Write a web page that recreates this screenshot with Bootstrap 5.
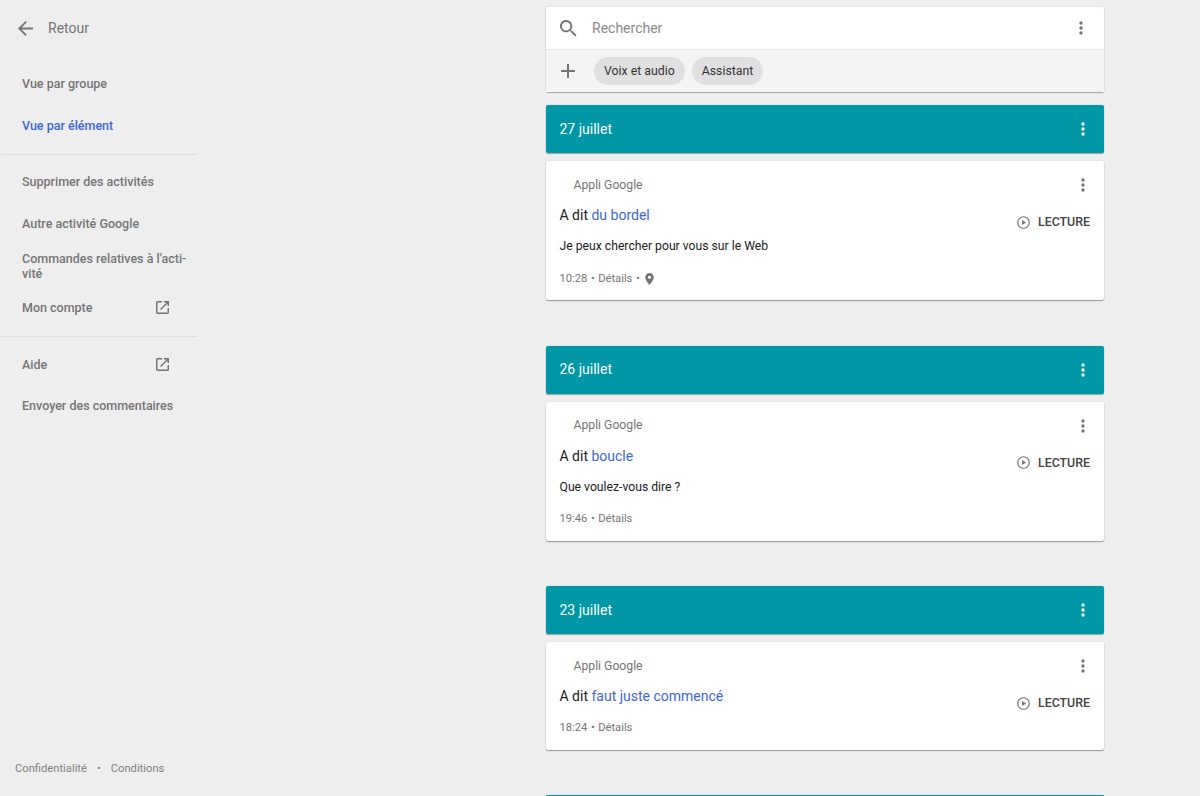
<!DOCTYPE html>
<html lang="fr">
<head>
<meta charset="utf-8">
<title>Mon activité</title>
<link href="https://cdn.jsdelivr.net/npm/bootstrap@5.3.0/dist/css/bootstrap.min.css" rel="stylesheet">
<style>
html,body{height:796px;overflow:hidden}
body{background:#eee;font-family:Roboto,"Liberation Sans",sans-serif;color:#212121;font-size:13px}
.shell{height:796px}
.side{width:197px;height:796px;flex:none}
.back-row{height:56px;padding-left:18px;color:#757575;font-size:14px;gap:15px}
.side-list{padding-top:6px}
.side-item{display:flex;align-items:center;justify-content:space-between;padding:0 28px 0 22px;height:42px;color:#757575;font-weight:500;font-size:12.5px;text-decoration:none;line-height:15px}
.side-item.on{color:#3d67d6}
.side-item.wide{padding-right:8px;white-space:nowrap}
.side-item.tall{height:33px;margin:5px 0 8px}
.side-item.slim{height:34px}
.side-item.last{height:41px}
.side-rule{border-top:1px solid #ddd;margin:8px 0 5px 1px}
.side-rule.lower{margin-top:12px;margin-bottom:6px}
.side-foot{padding:0 0 18px 15px;color:#808080;font-size:11.2px;gap:10px}
.main-col{margin-left:349px;width:558px;flex:none;padding-top:7px}
.searchbox{background:#fff;border-radius:2px;box-shadow:0 1px 1px rgba(0,0,0,.3),0 0 2px rgba(0,0,0,.12);margin-bottom:13px}
.search-top{height:43px;padding:0 21px 0 14px;border-bottom:1px solid #e6e6e6;color:#8a8a8a;font-size:14px;gap:15px}
.search-bottom{height:42px;background:#f4f4f4;padding:0 14px 0 15px}
.plus-ic{margin-right:19px;flex:none}
.chip-pill{background:#e0e0e0;border-radius:14px;height:28px;padding:1px 10px 0;display:flex;align-items:center;font-size:12.3px;color:#333;margin-right:7px}
.day-head{height:48px;background:#0097a7;color:#fff;font-size:14px;padding:0 19px 0 13.5px;border-radius:2px;box-shadow:0 1px 1px rgba(0,0,0,.3),0 0 2px rgba(0,0,0,.12);margin-bottom:8px}
.day-head.peek{height:1px;margin-bottom:0}
.entry{background:#fff;border-radius:2px;box-shadow:0 1px 1px rgba(0,0,0,.35),0 0 2px rgba(0,0,0,.12);margin-bottom:45.5px;padding:0 14px 0 13.5px;position:relative}
.entry-app{height:48px;padding:0 5px 0 14px;color:#757575;font-size:12.2px}
.entry-title{font-size:14px;line-height:20px;margin-top:-4px;color:#212121}
.entry-title span{color:#3d67d6}
.entry-reply{font-size:12.2px;line-height:16px;margin-top:13px;color:#212121}
.entry-meta{font-size:11.2px;color:#757575;height:16px;margin-top:17px;gap:3.5px}
.entry-meta.near{margin-top:14px}
.pin-ic{margin-left:2px}
.entry-play{position:absolute;right:14px;top:52px;font-size:12.4px;font-weight:500;color:#424242;gap:8px}
.pad-long{padding-bottom:13px}
.pad-short{padding-bottom:14px;margin-bottom:45px}
.dots-ic{display:block;flex:none}
</style>
</head>
<body>
<div class="shell d-flex">
  <aside class="side d-flex flex-column">
    <div class="back-row d-flex align-items-center">
      <svg width="15" height="15" viewBox="0 0 16 16" aria-hidden="true"><path d="M16 7H3.800l5.600-5.600L8 0 0 8l8 8 1.400-1.400L3.800 9H16z" fill="#757575"/></svg>
      <span>Retour</span>
    </div>
    <nav class="side-list">
      <a class="side-item" href="#">Vue par groupe</a>
      <a class="side-item on" href="#">Vue par élément</a>
      <div class="side-rule"></div>
      <a class="side-item" href="#">Supprimer des activités</a>
      <a class="side-item" href="#">Autre activité Google</a>
      <a class="side-item wide tall" href="#">Commandes relatives à l'acti-<br>vité</a>
      <a class="side-item slim" href="#">Mon compte
        <svg width="13" height="13" viewBox="0 0 14 14" aria-hidden="true"><path d="M12.400 12.400H1.600V1.600H6.500V0H1.600C.7 0 0 .7 0 1.600v10.800C0 13.300.7 14 1.600 14h10.800c.9 0 1.600-.7 1.600-1.600V7.500h-1.600zM8.500 0v1.600h2.800L4.400 8.500l1.100 1.100 6.900-6.900v2.800H14V0z" fill="#757575"/></svg>
      </a>
      <div class="side-rule lower"></div>
      <a class="side-item" href="#">Aide
        <svg width="13" height="13" viewBox="0 0 14 14" aria-hidden="true"><path d="M12.400 12.400H1.600V1.600H6.500V0H1.600C.7 0 0 .7 0 1.600v10.800C0 13.300.7 14 1.600 14h10.800c.9 0 1.600-.7 1.600-1.600V7.500h-1.600zM8.500 0v1.600h2.800L4.400 8.500l1.100 1.100 6.900-6.900v2.800H14V0z" fill="#757575"/></svg>
      </a>
      <a class="side-item wide last" href="#">Envoyer des commentaires</a>
    </nav>
    <div class="side-foot d-flex mt-auto"><span>Confidentialité</span><span>•</span><span>Conditions</span></div>
  </aside>

  <main class="main-col">
    <section class="searchbox">
      <div class="search-top d-flex align-items-center">
        <svg width="17" height="17" viewBox="0 0 18 18" aria-hidden="true"><path d="M12.500 11h-.8l-.3-.3A6.500 6.500 0 1 0 10.700 11.400l.3.3v.8l5 5 1.500-1.500zm-6 0A4.500 4.500 0 1 1 6.500 2a4.500 4.500 0 0 1 0 9z" fill="#757575"/></svg>
        <span class="flex-grow-1">Rechercher</span>
        <svg class="dots-ic" width="4" height="14" viewBox="0 0 4 14" aria-hidden="true"><circle cx="2" cy="2" r="1.700" fill="#757575"/><circle cx="2" cy="7" r="1.700" fill="#757575"/><circle cx="2" cy="12" r="1.700" fill="#757575"/></svg>
      </div>
      <div class="search-bottom d-flex align-items-center">
        <svg width="14" height="14" viewBox="0 0 14 14" class="plus-ic" aria-hidden="true"><path d="M14 8H8v6H6V8H0V6h6V0h2v6h6z" fill="#757575"/></svg>
        <span class="chip-pill">Voix et audio</span>
        <span class="chip-pill">Assistant</span>
      </div>
    </section>

    <div class="day-head d-flex align-items-center justify-content-between"><span>27 juillet</span>
      <svg class="dots-ic" width="4" height="14" viewBox="0 0 4 14" aria-hidden="true"><circle cx="2" cy="2" r="1.700" fill="#fff"/><circle cx="2" cy="7" r="1.700" fill="#fff"/><circle cx="2" cy="12" r="1.700" fill="#fff"/></svg>
    </div>
    <article class="entry pad-long">
      <div class="entry-app d-flex align-items-center justify-content-between"><span>Appli Google</span>
        <svg class="dots-ic" width="4" height="14" viewBox="0 0 4 14" aria-hidden="true"><circle cx="2" cy="2" r="1.700" fill="#757575"/><circle cx="2" cy="7" r="1.700" fill="#757575"/><circle cx="2" cy="12" r="1.700" fill="#757575"/></svg>
      </div>
      <div class="entry-title">A dit <span>du bordel</span></div>
      <div class="entry-reply">Je peux chercher pour vous sur le Web</div>
      <div class="entry-meta d-flex align-items-center"><span>10:28</span><span>•</span><span>Détails</span><span>•</span>
        <svg class="pin-ic" width="9" height="12" viewBox="0 0 10 14" aria-hidden="true"><path d="M5 0a5 5 0 0 0-5 5c0 3.500 5 9 5 9s5-5.500 5-9a5 5 0 0 0-5-5zm0 6.800A1.800 1.800 0 1 1 5 3.200a1.800 1.800 0 0 1 0 3.600z" fill="#757575"/></svg>
      </div>
      <div class="entry-play d-flex align-items-center">
        <svg width="13" height="13" viewBox="0 0 14 14" aria-hidden="true"><circle cx="7" cy="7" r="6.200" fill="none" stroke="#757575" stroke-width="1.300"/><path d="M5.500 4.200v5.600L9.800 7z" fill="#757575"/></svg>
        <span>LECTURE</span>
      </div>
    </article>

    <div class="day-head d-flex align-items-center justify-content-between"><span>26 juillet</span>
      <svg class="dots-ic" width="4" height="14" viewBox="0 0 4 14" aria-hidden="true"><circle cx="2" cy="2" r="1.700" fill="#fff"/><circle cx="2" cy="7" r="1.700" fill="#fff"/><circle cx="2" cy="12" r="1.700" fill="#fff"/></svg>
    </div>
    <article class="entry pad-long">
      <div class="entry-app d-flex align-items-center justify-content-between"><span>Appli Google</span>
        <svg class="dots-ic" width="4" height="14" viewBox="0 0 4 14" aria-hidden="true"><circle cx="2" cy="2" r="1.700" fill="#757575"/><circle cx="2" cy="7" r="1.700" fill="#757575"/><circle cx="2" cy="12" r="1.700" fill="#757575"/></svg>
      </div>
      <div class="entry-title">A dit <span>boucle</span></div>
      <div class="entry-reply">Que voulez-vous dire ?</div>
      <div class="entry-meta d-flex align-items-center"><span>19:46</span><span>•</span><span>Détails</span></div>
      <div class="entry-play d-flex align-items-center">
        <svg width="13" height="13" viewBox="0 0 14 14" aria-hidden="true"><circle cx="7" cy="7" r="6.200" fill="none" stroke="#757575" stroke-width="1.300"/><path d="M5.500 4.200v5.600L9.800 7z" fill="#757575"/></svg>
        <span>LECTURE</span>
      </div>
    </article>

    <div class="day-head d-flex align-items-center justify-content-between"><span>23 juillet</span>
      <svg class="dots-ic" width="4" height="14" viewBox="0 0 4 14" aria-hidden="true"><circle cx="2" cy="2" r="1.700" fill="#fff"/><circle cx="2" cy="7" r="1.700" fill="#fff"/><circle cx="2" cy="12" r="1.700" fill="#fff"/></svg>
    </div>
    <article class="entry pad-short">
      <div class="entry-app d-flex align-items-center justify-content-between"><span>Appli Google</span>
        <svg class="dots-ic" width="4" height="14" viewBox="0 0 4 14" aria-hidden="true"><circle cx="2" cy="2" r="1.700" fill="#757575"/><circle cx="2" cy="7" r="1.700" fill="#757575"/><circle cx="2" cy="12" r="1.700" fill="#757575"/></svg>
      </div>
      <div class="entry-title">A dit <span>faut juste commencé</span></div>
      <div class="entry-meta near d-flex align-items-center"><span>18:24</span><span>•</span><span>Détails</span></div>
      <div class="entry-play d-flex align-items-center">
        <svg width="13" height="13" viewBox="0 0 14 14" aria-hidden="true"><circle cx="7" cy="7" r="6.200" fill="none" stroke="#757575" stroke-width="1.300"/><path d="M5.500 4.200v5.600L9.800 7z" fill="#757575"/></svg>
        <span>LECTURE</span>
      </div>
    </article>

    <div class="day-head peek"></div>
  </main>
</div>
<script src="https://cdn.jsdelivr.net/npm/bootstrap@5.3.0/dist/js/bootstrap.bundle.min.js"></script>
</body>
</html>
